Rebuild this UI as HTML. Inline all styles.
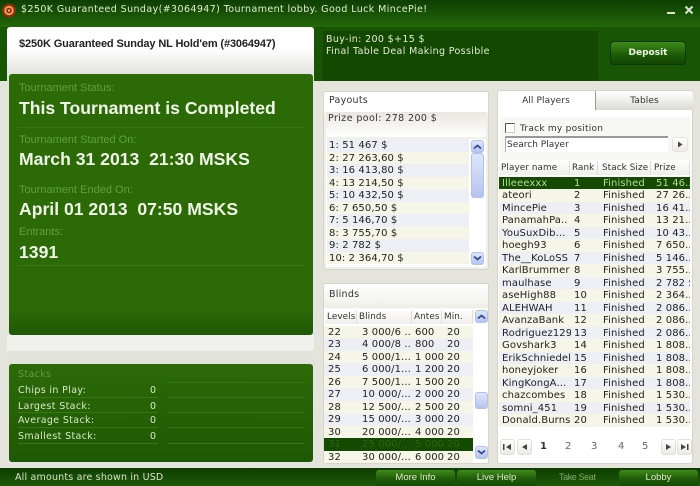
<!DOCTYPE html>
<html>
<head>
<meta charset="utf-8">
<style>
html,body{margin:0;padding:0;width:700px;height:486px;overflow:hidden;background:#e4e4dc}
*{box-sizing:border-box}
body{position:relative;font-family:"DejaVu Sans","Liberation Sans",sans-serif;font-size:10px;color:#222}
.a{position:absolute;white-space:nowrap}
.lab{color:#5fa03c;font-family:"Liberation Sans",sans-serif;font-size:11px}
.big{color:#f0f5e8;font-family:"Liberation Sans",sans-serif;font-weight:bold;font-size:17.6px}
.ln{position:absolute;height:1px;background:#347a14}
.st{color:#d8e8c8;letter-spacing:.35px;font-size:9.5px}
.panel{position:absolute;background:#fff;border:1px solid #d5d5cc;border-radius:3px}
.r{height:12.5px;line-height:14px;position:relative;white-space:nowrap;overflow:hidden;letter-spacing:.1px}
.c{background:#f6f6e8}.l{background:#eeeff5}
.r span{position:absolute;top:0;overflow:hidden}
.p1{left:3px;width:69px}.p2{left:75px}.p3{left:104px}.p4{left:157px;width:35px}
.b1{left:4px}.b2{left:38px}.b3{left:91px}.b4{left:123px}
.sb{position:absolute;width:13px;background:linear-gradient(#dfe6fa,#b5c3f0);border:1px solid #b4c0e4;border-radius:3px}
.sb svg{position:absolute;left:0;top:0}
.hd{position:absolute;white-space:nowrap;overflow:hidden;background:linear-gradient(#fff,#efeeea);border-right:1px solid #ddd;font-size:8.8px;line-height:14px;letter-spacing:.1px;color:#333;padding-left:2px;height:14px}
.btn{position:absolute;top:470px;height:16px;background:linear-gradient(#3f8a1a,#1f5c08 55%,#154a04);border-radius:3px 3px 0 0;color:#dde8cc;text-align:center;font-family:"Liberation Sans",sans-serif;font-size:9.5px;line-height:16px}
.pg{position:absolute;top:439px;width:15px;height:16px;background:linear-gradient(#fff,#eceae4);border:1px solid #e0dfd8;border-radius:3px}
.num{position:absolute;top:441px;font-size:10px;color:#666}
</style>
</head>
<body>
<!-- title bar -->
<div class="a" style="left:0;top:0;width:700px;height:27px;background:linear-gradient(#0e3e02,#236808)"></div>
<div class="a" style="left:0;top:27px;width:700px;height:54px;background:#185505"></div>
<svg class="a" style="left:1px;top:2px" width="16" height="17" viewBox="0 0 16 17">
<circle cx="8" cy="8.500" r="7" fill="#8e2a10"/><circle cx="8" cy="8.500" r="4.800" fill="#e8a050"/><circle cx="8" cy="8.500" r="2.800" fill="#a02c10"/><circle cx="8" cy="8.500" r="1" fill="#f4e0c0"/>
</svg>
<div class="a" style="left:21px;top:3px;font-size:9.5px;letter-spacing:.4px;color:#e0ecd4;line-height:13px">$250K Guaranteed Sunday(#3064947) Tournament lobby. Good Luck MincePie!</div>
<div class="a" style="left:667px;top:12px;width:8px;height:2px;background:#d8e4cc"></div>
<svg class="a" style="left:684px;top:5px" width="10" height="10"><path d="M1.500 1.500l7 7M8.500 1.500l-7 7" stroke="#d8e4cc" stroke-width="2" fill="none"/></svg>

<!-- header center -->
<div class="a" style="left:323px;top:31px;width:275px;height:50px;background:#134800"></div>
<div class="a" style="left:326px;top:34px;color:#e4ecd8;font-size:9.5px;line-height:12px;letter-spacing:.35px">Buy-in: 200 $+15 $<br>Final Table Deal Making Possible</div>
<div class="a" style="left:610px;top:41px;width:76px;height:24px;background:linear-gradient(#3f8a1a,#1c5a06 60%,#124403);border:1px solid #0c3602;border-radius:4px;color:#f0f5e8;font:bold 9px/22px 'DejaVu Sans',sans-serif;text-align:center">Deposit</div>

<!-- left card -->
<div class="a" style="left:7px;top:27px;width:307px;height:441px;background:linear-gradient(#fff 0,#fff 22px,#e4e4e0 45px,#e4e4e0 100%);border-radius:3px 3px 0 0"></div>
<div class="a" style="left:7px;top:335px;width:307px;height:30px;background:linear-gradient(#f0f0ec,#f0f0ec 50%,#e2e2dc 55%)"></div>
<div class="a" style="left:19px;top:38px;font:bold 11px 'Liberation Sans',sans-serif;letter-spacing:-.13px;color:#222">$250K Guaranteed Sunday NL Hold'em (#3064947)</div>

<div class="a" style="left:9px;top:74px;width:304px;height:261px;background:linear-gradient(#2c6a08 0,#2c6a08 90%,#1f5804);border-radius:3px"></div>
<div class="a lab" style="left:19px;top:82px">Tournament Status:</div>
<div class="a big" style="left:19px;top:98px">This Tournament is Completed</div>
<div class="ln" style="left:18px;top:127px;width:286px"></div>
<div class="a lab" style="left:19px;top:134px">Tournament Started On:</div>
<div class="a big" style="left:19px;top:149px;white-space:pre">March 31 2013  21:30 MSKS</div>
<div class="a lab" style="left:19px;top:184px">Tournament Ended On:</div>
<div class="a big" style="left:19px;top:199px;white-space:pre">April 01 2013  07:50 MSKS</div>
<div class="a lab" style="left:19px;top:226px">Entrants:</div>
<div class="a big" style="left:19px;top:242px">1391</div>
<div class="ln" style="left:18px;top:265px;width:286px"></div>

<!-- stacks -->
<div class="a" style="left:9px;top:364px;width:304px;height:98px;background:linear-gradient(#2c6a08,#1f5804);border-radius:3px"></div>
<div class="a" style="left:18px;top:369px;color:#5fa03c;font-size:9.5px;letter-spacing:.35px">Stacks</div>
<div class="a st" style="left:18px;top:385px">Chips in Play:</div><div class="a st" style="left:150px;top:385px">0</div>
<div class="a st" style="left:18px;top:401px">Largest Stack:</div><div class="a st" style="left:150px;top:401px">0</div>
<div class="a st" style="left:18px;top:415px">Average Stack:</div><div class="a st" style="left:150px;top:415px">0</div>
<div class="a st" style="left:18px;top:431px">Smallest Stack:</div><div class="a st" style="left:150px;top:431px">0</div>
<div class="ln" style="left:18px;top:397px;width:140px"></div><div class="ln" style="left:167px;top:382px;width:137px"></div>
<div class="ln" style="left:167px;top:397px;width:137px"></div>
<div class="ln" style="left:18px;top:412px;width:140px"></div><div class="ln" style="left:167px;top:412px;width:137px"></div>
<div class="ln" style="left:18px;top:427px;width:140px"></div><div class="ln" style="left:167px;top:427px;width:137px"></div>
<div class="ln" style="left:18px;top:443px;width:140px"></div><div class="ln" style="left:167px;top:443px;width:137px"></div>

<!-- payouts -->
<div class="panel" style="left:323px;top:91px;width:166px;height:179px;background:linear-gradient(#fff,#fff 20px,#f0f0ea 21px)"></div>
<div class="a" style="left:329px;top:95px;font-size:9.5px;letter-spacing:.25px;color:#333">Payouts</div>
<div class="a" style="left:326px;top:112px;width:160px;height:25px;background:linear-gradient(#e8e7e0,#fff)"></div>
<div class="a" style="left:328px;top:113px;font-size:9.5px;letter-spacing:.4px;color:#333">Prize pool: 278 200 $</div>
<div class="a" style="left:326px;top:139px;width:160px;height:128px;background:#fff"></div>
<div class="a" style="left:327px;top:139px;width:142px">
<div class="r l" style="padding-left:2px">1: 51 467 $</div>
<div class="r c" style="padding-left:2px">2: 27 263,60 $</div>
<div class="r l" style="padding-left:2px">3: 16 413,80 $</div>
<div class="r c" style="padding-left:2px">4: 13 214,50 $</div>
<div class="r l" style="padding-left:2px">5: 10 432,50 $</div>
<div class="r c" style="padding-left:2px">6: 7 650,50 $</div>
<div class="r l" style="padding-left:2px">7: 5 146,70 $</div>
<div class="r c" style="padding-left:2px">8: 3 755,70 $</div>
<div class="r l" style="padding-left:2px">9: 2 782 $</div>
<div class="r c" style="padding-left:2px">10: 2 364,70 $</div>
</div>
<div class="sb" style="left:471px;top:140px;height:13px"><svg width="11" height="11"><path d="M2 7.500l3.500-3 3.500 3" stroke="#2c4a90" stroke-width="1.800" fill="none"/></svg></div>
<div class="sb" style="left:471px;top:153px;height:45px"></div>
<div class="sb" style="left:471px;top:252px;height:13px"><svg width="11" height="11"><path d="M2 3.500l3.500 3 3.500-3" stroke="#2c4a90" stroke-width="1.800" fill="none"/></svg></div>

<!-- blinds -->
<div class="panel" style="left:323px;top:283px;width:166px;height:181px;background:linear-gradient(#fff,#efefe9 24px,#fff 25px)"></div>
<div class="a" style="left:329px;top:289px;font-size:9.5px;letter-spacing:.25px;color:#333">Blinds</div>
<div class="hd" style="left:325px;top:310px;width:32px">Levels</div>
<div class="hd" style="left:357px;top:310px;width:55px">Blinds</div>
<div class="hd" style="left:412px;top:310px;width:30px">Antes</div>
<div class="hd" style="left:442px;top:310px;width:31px">Min.</div>
<div class="a" style="left:324px;top:325.500px;width:149px">
<div class="r c"><span class="b1">22</span><span class="b2">3 000/6 ..</span><span class="b3">600</span><span class="b4">20</span></div>
<div class="r l"><span class="b1">23</span><span class="b2">4 000/8 ..</span><span class="b3">800</span><span class="b4">20</span></div>
<div class="r c"><span class="b1">24</span><span class="b2">5 000/1...</span><span class="b3">1 000</span><span class="b4">20</span></div>
<div class="r l"><span class="b1">25</span><span class="b2">6 000/1...</span><span class="b3">1 200</span><span class="b4">20</span></div>
<div class="r c"><span class="b1">26</span><span class="b2">7 500/1...</span><span class="b3">1 500</span><span class="b4">20</span></div>
<div class="r l"><span class="b1">27</span><span class="b2">10 000/...</span><span class="b3">2 000</span><span class="b4">20</span></div>
<div class="r c"><span class="b1">28</span><span class="b2">12 500/...</span><span class="b3">2 500</span><span class="b4">20</span></div>
<div class="r l"><span class="b1">29</span><span class="b2">15 000/...</span><span class="b3">3 000</span><span class="b4">20</span></div>
<div class="r c"><span class="b1">30</span><span class="b2">20 000/...</span><span class="b3">4 000</span><span class="b4">20</span></div>
<div class="r" style="background:#144a02;color:#2a6410"><span class="b1">31</span><span class="b2">25 000/...</span><span class="b3">5 000</span><span class="b4">20</span></div>
<div class="r c"><span class="b1">32</span><span class="b2">30 000/...</span><span class="b3">6 000</span><span class="b4">20</span></div>
</div>
<div class="sb" style="left:475px;top:310px;height:13px"><svg width="11" height="11"><path d="M2 7.500l3.500-3 3.500 3" stroke="#2c4a90" stroke-width="1.800" fill="none"/></svg></div>
<div class="sb" style="left:475px;top:392px;height:17px"></div>
<div class="sb" style="left:475px;top:446px;height:13px"><svg width="11" height="11"><path d="M2 3.500l3.500 3 3.500-3" stroke="#2c4a90" stroke-width="1.800" fill="none"/></svg></div>

<!-- players -->
<div class="panel" style="left:497px;top:90px;width:196px;height:374px"></div>
<div class="a" style="left:595px;top:91px;width:98px;height:19px;background:linear-gradient(#fff,#dcdcd4);border-radius:0 3px 0 0;border-left:1px solid #999;text-align:center;font-size:9px;line-height:20px;letter-spacing:.1px;color:#333">Tables</div>
<div class="a" style="left:497px;top:91px;width:98px;height:19px;text-align:center;font-size:9px;line-height:20px;letter-spacing:.1px;color:#333">All Players</div>
<div class="a" style="left:500px;top:117px;width:190px;height:43px;background:#f7f7f4"></div>
<div class="a" style="left:505px;top:123px;width:10px;height:10px;background:#fff;border:1px solid #555;border-right-color:#ccc;border-bottom-color:#ccc"></div>
<div class="a" style="left:520px;top:124px;font-size:9px;letter-spacing:.25px;color:#333">Track my position</div>
<div class="a" style="left:505px;top:136px;width:163px;height:16px;background:#fff;border-top:2px solid #999;border-left:1px solid #aaa;font-size:9px;line-height:14px;padding-left:1px;color:#333">Search Player</div>
<div class="a" style="left:672px;top:137px;width:16px;height:15px;background:linear-gradient(#fff,#ecebe5);border:1px solid #e4e3dd;border-radius:3px"></div>
<svg class="a" style="left:672px;top:136px" width="16" height="16"><path d="M6 5.500l4.500 3-4.500 3z" fill="#444"/></svg>
<div class="hd" style="left:499px;top:161px;width:71px">Player name</div>
<div class="hd" style="left:570px;top:161px;width:28px">Rank</div>
<div class="hd" style="left:598px;top:161px;width:53px;padding-left:4px">Stack Size</div>
<div class="hd" style="left:651px;top:161px;width:39px;padding-left:3px">Prize</div>
<div class="a" style="left:499px;top:176.500px;width:191px">
<div class="r" style="background:#144a02;color:#b5dc90"><span class="p1">Illeeexxx</span><span class="p2">1</span><span class="p3">Finished</span><span class="p4">51 46..</span></div>
<div class="r c"><span class="p1">ateori</span><span class="p2">2</span><span class="p3">Finished</span><span class="p4">27 26..</span></div>
<div class="r l"><span class="p1">MincePie</span><span class="p2">3</span><span class="p3">Finished</span><span class="p4">16 41..</span></div>
<div class="r c"><span class="p1">PanamahPa..</span><span class="p2">4</span><span class="p3">Finished</span><span class="p4">13 21..</span></div>
<div class="r l"><span class="p1">YouSuxDib...</span><span class="p2">5</span><span class="p3">Finished</span><span class="p4">10 43..</span></div>
<div class="r c"><span class="p1">hoegh93</span><span class="p2">6</span><span class="p3">Finished</span><span class="p4">7 650..</span></div>
<div class="r l"><span class="p1">The__KoLoSS</span><span class="p2">7</span><span class="p3">Finished</span><span class="p4">5 146..</span></div>
<div class="r c"><span class="p1">KarlBrummer</span><span class="p2">8</span><span class="p3">Finished</span><span class="p4">3 755..</span></div>
<div class="r l"><span class="p1">maulhase</span><span class="p2">9</span><span class="p3">Finished</span><span class="p4">2 782 $</span></div>
<div class="r c"><span class="p1">aseHigh88</span><span class="p2">10</span><span class="p3">Finished</span><span class="p4">2 364..</span></div>
<div class="r l"><span class="p1">ALEHWAH</span><span class="p2">11</span><span class="p3">Finished</span><span class="p4">2 086..</span></div>
<div class="r c"><span class="p1">AvanzaBank</span><span class="p2">12</span><span class="p3">Finished</span><span class="p4">2 086..</span></div>
<div class="r l"><span class="p1">Rodriguez129</span><span class="p2">13</span><span class="p3">Finished</span><span class="p4">2 086..</span></div>
<div class="r c"><span class="p1">Govshark3</span><span class="p2">14</span><span class="p3">Finished</span><span class="p4">1 808..</span></div>
<div class="r l"><span class="p1">ErikSchniedel</span><span class="p2">15</span><span class="p3">Finished</span><span class="p4">1 808..</span></div>
<div class="r c"><span class="p1">honeyjoker</span><span class="p2">16</span><span class="p3">Finished</span><span class="p4">1 808..</span></div>
<div class="r l"><span class="p1">KingKongA...</span><span class="p2">17</span><span class="p3">Finished</span><span class="p4">1 808..</span></div>
<div class="r c"><span class="p1">chazcombes</span><span class="p2">18</span><span class="p3">Finished</span><span class="p4">1 530..</span></div>
<div class="r l"><span class="p1">somni_451</span><span class="p2">19</span><span class="p3">Finished</span><span class="p4">1 530..</span></div>
<div class="r c"><span class="p1">Donald.Burns</span><span class="p2">20</span><span class="p3">Finished</span><span class="p4">1 530..</span></div>
</div>

<!-- pagination -->
<div class="pg" style="left:500px"></div>
<div class="pg" style="left:517px"></div>
<div class="pg" style="left:661px"></div>
<div class="pg" style="left:677px"></div>
<svg class="a" style="left:499px;top:439px" width="196" height="16" fill="#444">
<path d="M4 5h1.500v6H4zM12 5v6L7 8zM28 5v6l-5-3zM167 5l5 3-5 3zM182 5l5 3-5 3zM188 5h1.500v6H188z"/>
</svg>
<div class="num" style="left:540px;font-weight:bold;color:#333">1</div>
<div class="num" style="left:565px">2</div>
<div class="num" style="left:591px">3</div>
<div class="num" style="left:618px">4</div>
<div class="num" style="left:642px">5</div>

<!-- footer -->
<div class="a" style="left:0;top:468px;width:700px;height:18px;background:linear-gradient(#0e3c00,#1f5a08)"></div>
<div class="a" style="left:15px;top:472px;color:#d8e4cc;font-size:9.5px;letter-spacing:.18px">All amounts are shown in USD</div>
<div class="btn" style="left:376px;width:79px">More Info</div>
<div class="btn" style="left:457px;width:79px">Live Help</div>
<div class="a" style="left:559px;top:472px;color:#7ea868;font:9px 'Liberation Sans',sans-serif;letter-spacing:-.4px">Take Seat</div>
<div class="btn" style="left:619px;width:79px">Lobby</div>
</body>
</html>
